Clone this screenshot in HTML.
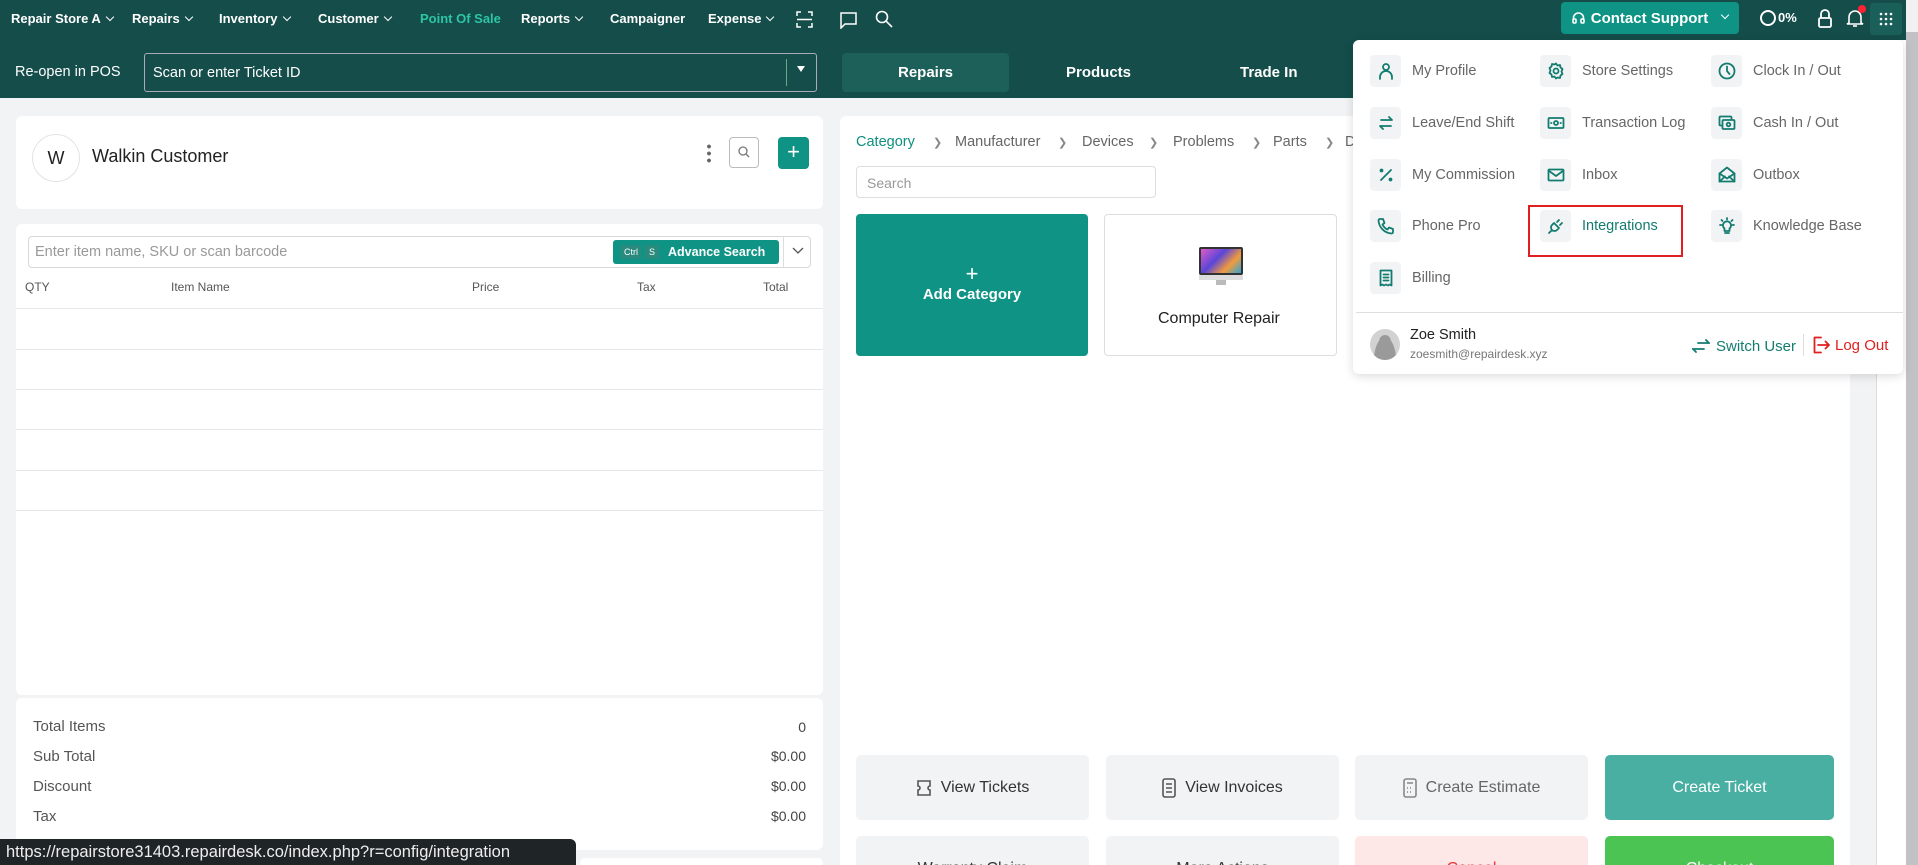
<!DOCTYPE html>
<html style="overflow:hidden;width:1918px;height:865px"><head><meta charset="utf-8"><style>
*{box-sizing:border-box;margin:0;padding:0}
body{width:1918px;height:865px;overflow:hidden;background:#f2f3f5;font-family:"Liberation Sans",sans-serif;position:relative;color:#222}
.abs{position:absolute}
.top{left:0;top:0;width:1918px;height:98px;background:#144d4a}
.nav{top:11px;font-size:13px;font-weight:bold;color:#fff;white-space:nowrap}
.chev{display:inline-block;width:6px;height:6px;border-right:1.3px solid #fff;border-bottom:1.3px solid #fff;transform:rotate(45deg);margin-left:6px;position:relative;top:-3px}
.card{background:#fff;border-radius:6px}
.line{position:absolute;left:16px;width:807px;height:1px;background:#e6e7ea}
.th{position:absolute;top:280px;font-size:12px;color:#555}
.tot{position:absolute;font-size:15px;color:#555}
.totr{position:absolute;right:1112px;font-size:14px;color:#444}
.bc{position:absolute;top:134px;font-size:14.5px;color:#666}
.gt{position:absolute;color:#888;font-size:11px;top:136px}
.btn{position:absolute;height:65px;border-radius:5px;background:#f2f3f5;display:flex;align-items:center;justify-content:center;font-size:16px;color:#333;gap:9px}
.dd{left:1353px;top:40px;width:550px;height:334px;background:#fff;border-radius:6px;box-shadow:0 2px 10px rgba(0,0,0,.15)}
.it{position:absolute;display:flex;align-items:center;font-size:14.5px;color:#666}
.ib{width:31px;height:32px;background:#f2f3f5;border-radius:4px;margin-right:11px;display:flex;align-items:center;justify-content:center}
.ib svg{width:18px;height:18px;fill:none;stroke:#137c70;stroke-width:1.8;stroke-linecap:round;stroke-linejoin:round}
</style></head><body>
<div class="abs top"></div>
<div class="abs nav" style="left:11px">Repair Store A<span class="chev"></span></div>
<div class="abs nav" style="left:132px">Repairs<span class="chev"></span></div>
<div class="abs nav" style="left:219px">Inventory<span class="chev"></span></div>
<div class="abs nav" style="left:318px">Customer<span class="chev"></span></div>
<div class="abs nav" style="left:420px;color:#2ec4a6">Point Of Sale</div>
<div class="abs nav" style="left:521px">Reports<span class="chev"></span></div>
<div class="abs nav" style="left:610px">Campaigner</div>
<div class="abs nav" style="left:708px">Expense<span class="chev"></span></div>
<svg class="abs" style="left:796px;top:11px" width="17" height="17" fill="none" stroke="#fff" stroke-width="1.5"><path d="M1 5V1h4M12 1h4v4M16 12v4h-4M5 16H1v-4M1 8.5h15"/></svg>
<svg class="abs" style="left:840px;top:12px" width="17" height="17" fill="none" stroke="#fff" stroke-width="1.5"><path d="M1 1h15v11H5l-4 4z"/></svg>
<svg class="abs" style="left:875px;top:10px" width="18" height="18" fill="none" stroke="#fff" stroke-width="1.6"><circle cx="7" cy="7" r="5.5"/><path d="M11 11l6 6"/></svg>
<div class="abs" style="left:1561px;top:2px;width:178px;height:32px;background:#0e9384;border-radius:4px;color:#fff;font-size:15px;font-weight:bold;display:flex;align-items:center;justify-content:center;gap:6px"><svg width="13" height="14" fill="none" stroke="#fff" stroke-width="1.6"><path d="M1.5 9V7a5 5 0 0110 0v2"/><rect x="1" y="8" width="3" height="4" rx="1"/><rect x="9" y="8" width="3" height="4" rx="1"/></svg>Contact Support<span class="chev" style="margin-left:8px"></span></div>
<div class="abs" style="left:1760px;top:10px;width:16px;height:16px;border:2px solid #fff;border-radius:50%"></div>
<div class="abs" style="left:1778px;top:10px;color:#fff;font-size:13px;font-weight:bold">0%</div>
<svg class="abs" style="left:1817px;top:9px" width="16" height="20" fill="none" stroke="#fff" stroke-width="1.8"><path d="M4 9V5a4 4 0 018 0v4"/><rect x="2" y="9" width="12" height="9" rx="1.5"/></svg>
<svg class="abs" style="left:1846px;top:8px" width="18" height="20" fill="none" stroke="#fff" stroke-width="1.6"><path d="M3 15V9a6 6 0 0112 0v6l2 1H1z"/><path d="M7 18h4"/></svg>
<div class="abs" style="left:1858px;top:5px;width:8px;height:8px;background:#f23;border-radius:50%"></div>
<div class="abs" style="left:1870px;top:3px;width:32px;height:32px;background:#1b5f5a;border-radius:3px"></div>
<svg class="abs" style="left:1879px;top:12px" width="14" height="14" fill="#fff"><circle cx="2" cy="2" r="1.3"/><circle cx="7" cy="2" r="1.3"/><circle cx="12" cy="2" r="1.3"/><circle cx="2" cy="7" r="1.3"/><circle cx="7" cy="7" r="1.3"/><circle cx="12" cy="7" r="1.3"/><circle cx="2" cy="12" r="1.3"/><circle cx="7" cy="12" r="1.3"/><circle cx="12" cy="12" r="1.3"/></svg>

<div class="abs" style="left:15px;top:64px;color:#fff;font-size:14.5px">Re-open in POS</div>
<div class="abs" style="left:144px;top:53px;width:673px;height:39px;border:1px solid #aab;border-radius:3px;color:#fff;font-size:14.5px;padding:11px 8px">Scan or enter Ticket ID</div>
<div class="abs" style="left:786px;top:59px;width:1px;height:27px;background:#6a8"></div>
<div class="abs" style="left:797px;top:66px;width:0;height:0;border-left:4px solid transparent;border-right:4px solid transparent;border-top:6px solid #fff"></div>
<div class="abs" style="left:842px;top:53px;width:167px;height:39px;background:#1d5f59;border-radius:4px;color:#fff;font-size:15px;font-weight:bold;text-align:center;line-height:39px">Repairs</div>
<div class="abs" style="left:1066px;top:64px;color:#fff;font-size:15px;font-weight:bold">Products</div>
<div class="abs" style="left:1240px;top:64px;color:#fff;font-size:15px;font-weight:bold">Trade In</div>

<div class="abs card" style="left:16px;top:116px;width:807px;height:93px"></div>
<div class="abs" style="left:32px;top:134px;width:48px;height:48px;border:1px solid #e3e3e3;border-radius:50%;text-align:center;line-height:46px;font-size:18px">W</div>
<div class="abs" style="left:92px;top:146px;font-size:18px;color:#222">Walkin Customer</div>
<div class="abs" style="left:707px;top:143px;width:4px;height:20px;background:radial-gradient(circle,#666 1.8px,transparent 2px) 0 0/4px 7px"></div>
<div class="abs" style="left:729px;top:137px;width:30px;height:31px;border:1px solid #bbb;border-radius:4px"></div>
<svg class="abs" style="left:738px;top:146px" width="12" height="12" fill="none" stroke="#777" stroke-width="1.3"><circle cx="5" cy="5" r="4"/><path d="M8 8l3 3"/></svg>
<div class="abs" style="left:778px;top:137px;width:31px;height:32px;background:#0e9384;border-radius:4px;color:#fff;font-size:22px;text-align:center;line-height:30px">+</div>

<div class="abs card" style="left:16px;top:224px;width:807px;height:471px"></div>
<div class="abs" style="left:28px;top:236px;width:783px;height:32px;border:1px solid #d6d8dc;border-radius:4px"></div>
<div class="abs" style="left:35px;top:244px;font-size:14.5px;color:#999">Enter item name, SKU or scan barcode</div>
<div class="abs" style="left:613px;top:240px;width:166px;height:24px;background:#0e9384;border-radius:3px;color:#fff;font-size:12.5px;font-weight:bold;display:flex;align-items:center;padding-left:8px;gap:4px"><span style="background:#2a8a7d;font-size:9px;font-weight:normal;padding:2px 3px;border-radius:2px">Ctrl</span><span style="background:#2a8a7d;font-size:9px;font-weight:normal;padding:2px 4px;border-radius:2px">S</span><span style="margin-left:5px">Advance Search</span></div>
<div class="abs" style="left:783px;top:237px;width:1px;height:30px;background:#ddd"></div>
<svg class="abs" style="left:792px;top:247px" width="12" height="8" fill="none" stroke="#555" stroke-width="1.3"><path d="M1 1l5 5 5-5"/></svg>
<div class="th" style="left:25px">QTY</div><div class="th" style="left:171px">Item Name</div><div class="th" style="left:472px">Price</div><div class="th" style="left:637px">Tax</div><div class="th" style="left:763px">Total</div>
<div class="line" style="top:308px"></div><div class="line" style="top:349px"></div><div class="line" style="top:389px"></div><div class="line" style="top:429px"></div><div class="line" style="top:470px"></div><div class="line" style="top:510px"></div>

<div class="abs card" style="left:16px;top:698px;width:807px;height:152px"></div>
<div class="tot" style="left:33px;top:718px">Total Items</div><div class="totr" style="top:719px">0</div>
<div class="tot" style="left:33px;top:748px">Sub Total</div><div class="totr" style="top:748px">$0.00</div>
<div class="tot" style="left:33px;top:778px">Discount</div><div class="totr" style="top:778px">$0.00</div>
<div class="tot" style="left:33px;top:808px">Tax</div><div class="totr" style="top:808px">$0.00</div>
<div class="abs card" style="left:580px;top:858px;width:243px;height:10px"></div>
<div class="abs" style="left:0;top:839px;width:576px;height:26px;background:#1f2426;border-radius:0 6px 0 0;color:#eee;font-size:16.5px;padding:4px 0 0 6px;white-space:nowrap">https://repairstore31403.repairdesk.co/index.php?r=config/integration</div>

<div class="abs" style="left:840px;top:116px;width:1010px;height:749px;background:#fff;border-radius:6px 6px 0 0"></div>
<div class="bc" style="left:856px;color:#0e8f7f">Category</div><div class="gt" style="left:933px">❯</div>
<div class="bc" style="left:955px">Manufacturer</div><div class="gt" style="left:1058px">❯</div>
<div class="bc" style="left:1082px">Devices</div><div class="gt" style="left:1149px">❯</div>
<div class="bc" style="left:1173px">Problems</div><div class="gt" style="left:1252px">❯</div>
<div class="bc" style="left:1273px">Parts</div><div class="gt" style="left:1325px">❯</div>
<div class="bc" style="left:1345px">D</div>
<div class="abs" style="left:856px;top:166px;width:300px;height:32px;border:1px solid #ddd;border-radius:4px;font-size:14px;color:#999;padding:8px 10px">Search</div>
<div class="abs" style="left:856px;top:214px;width:232px;height:142px;background:#0e9384;border-radius:4px;color:#fff;text-align:center"><div style="font-size:22px;margin-top:50px;line-height:20px">+</div><div style="font-size:15px;font-weight:bold;margin-top:2px">Add Category</div></div>
<div class="abs" style="left:1104px;top:214px;width:233px;height:142px;border:1px solid #ddd;border-radius:4px"></div>
<div class="abs" style="left:1199px;top:247px;width:44px;height:28px;background:linear-gradient(135deg,#e05ac7,#5a46d8 40%,#f39b3b 70%,#2ea4d9);border:2px solid #333;border-radius:2px"></div>
<div class="abs" style="left:1199px;top:275px;width:44px;height:5px;background:#ddd"></div>
<div class="abs" style="left:1216px;top:280px;width:10px;height:5px;background:#bbb"></div>
<div class="abs" style="left:1158px;top:310px;font-size:16px;color:#222">Computer Repair</div>

<div class="btn" style="left:856px;top:755px;width:233px"><svg width="16" height="18" fill="none" stroke="#555" stroke-width="1.6"><path d="M2 2h12v5a2 2 0 000 4v5H2v-5a2 2 0 000-4z"/></svg>View Tickets</div>
<div class="btn" style="left:1106px;top:755px;width:233px"><svg width="14" height="20" fill="none" stroke="#555" stroke-width="1.6"><rect x="1" y="1" width="12" height="18" rx="2"/><path d="M4 6h6M4 10h6M4 14h6"/></svg>View Invoices</div>
<div class="btn" style="left:1355px;top:755px;width:233px;color:#666"><svg width="14" height="20" fill="none" stroke="#888" stroke-width="1.6"><rect x="1" y="1" width="12" height="18" rx="2"/><path d="M4 5h6M4 10h1M7 10h1M4 14h1M7 14h1"/></svg>Create Estimate</div>
<div class="btn" style="left:1605px;top:755px;width:229px;background:#4aafa3;color:#fff">Create Ticket</div>
<div class="btn" style="left:856px;top:836px;width:233px;align-items:flex-start;padding-top:24px">Warranty Claim</div>
<div class="btn" style="left:1106px;top:836px;width:233px;align-items:flex-start;padding-top:24px">More Actions</div>
<div class="btn" style="left:1355px;top:836px;width:233px;background:#fde7e7;color:#e33;align-items:flex-start;padding-top:24px">Cancel</div>
<div class="btn" style="left:1605px;top:836px;width:229px;background:#4bc453;color:#fff;align-items:flex-start;padding-top:24px">Checkout</div>

<div class="abs" style="left:1876px;top:40px;width:30px;height:825px;background:#fff;border-left:1px solid #ddd"></div>
<div class="abs" style="left:1906px;top:0;width:12px;height:865px;background:#c1c1c6"></div>
<div class="abs" style="left:1906px;top:0;width:12px;height:32px;background:#f1f1f1"></div>

<div class="abs dd"></div>
<div class="it" style="left:1370px;top:55px"><div class="ib"><svg viewBox="0 0 18 18"><circle cx="9" cy="5" r="3"/><path d="M3 17v-2a6 6 0 0112 0v2"/></svg></div>My Profile</div>
<div class="it" style="left:1540px;top:55px"><div class="ib"><svg viewBox="0 0 18 18"><circle cx="9" cy="9" r="2.5"/><path d="M9 1.5l1.5 2 2.5-.5.5 2.5 2 1.5-1 2.5 1 2.5-2 1.5-.5 2.5-2.5-.5L9 16.5l-1.5-2-2.5.5-.5-2.5-2-1.5 1-2.5-1-2.5 2-1.5.5-2.5 2.5.5z"/></svg></div>Store Settings</div>
<div class="it" style="left:1711px;top:55px"><div class="ib"><svg viewBox="0 0 18 18"><circle cx="9" cy="9" r="7.5"/><path d="M9 4.5V9l2.5 3"/></svg></div>Clock In / Out</div>
<div class="it" style="left:1370px;top:107px"><div class="ib"><svg viewBox="0 0 18 18"><path d="M4 6h11l-3-3M14 12H3l3 3"/></svg></div>Leave/End Shift</div>
<div class="it" style="left:1540px;top:107px"><div class="ib"><svg viewBox="0 0 18 18"><rect x="1.5" y="4" width="15" height="10" rx="1"/><circle cx="9" cy="9" r="2"/><path d="M4 9h.5M13.5 9h.5"/></svg></div>Transaction Log</div>
<div class="it" style="left:1711px;top:107px"><div class="ib"><svg viewBox="0 0 18 18"><rect x="1.5" y="2.5" width="12" height="9" rx="1"/><rect x="4.5" y="6" width="12" height="9" rx="1" fill="#f2f3f5"/><circle cx="10.5" cy="10.5" r="1.8"/></svg></div>Cash In / Out</div>
<div class="it" style="left:1370px;top:159px"><div class="ib"><svg viewBox="0 0 18 18"><path d="M14 4L4 14"/><circle cx="4.5" cy="4.5" r="1" fill="#137c70"/><circle cx="13.5" cy="13.5" r="1" fill="#137c70"/></svg></div>My Commission</div>
<div class="it" style="left:1540px;top:159px"><div class="ib"><svg viewBox="0 0 18 18"><rect x="1.5" y="3.5" width="15" height="11" rx="1"/><path d="M1.5 4.5L9 10l7.5-5.5"/></svg></div>Inbox</div>
<div class="it" style="left:1711px;top:159px"><div class="ib"><svg viewBox="0 0 18 18"><path d="M1.5 7.5L9 1.5l7.5 6v8h-15z"/><path d="M1.5 7.5l7.5 5 7.5-5M1.5 15.5l5.5-5M16.5 15.5l-5.5-5"/></svg></div>Outbox</div>
<div class="it" style="left:1370px;top:210px"><div class="ib"><svg viewBox="0 0 18 18"><path d="M3 2h3l1.5 4-2 1.5a10 10 0 005 5l1.5-2 4 1.5v3a1.5 1.5 0 01-1.5 1.5A14 14 0 011.5 3.5 1.5 1.5 0 013 2z"/></svg></div>Phone Pro</div>
<div class="it" style="left:1540px;top:210px;color:#137c70"><div class="ib"><svg viewBox="0 0 18 18"><path d="M2 16l3-3M7 6l5 5-2 2a3.5 3.5 0 01-5-5zM10 5l2-2M13 8l2-2"/></svg></div>Integrations</div>
<div class="it" style="left:1711px;top:210px"><div class="ib"><svg viewBox="0 0 18 18"><path d="M6.5 11.5a4 4 0 115 0V14h-5z M7 16h4M9 1v1.5M2 8h1.5M14.5 8H16M3.5 3l1 1M14.5 3l-1 1"/></svg></div>Knowledge Base</div>
<div class="it" style="left:1370px;top:262px"><div class="ib"><svg viewBox="0 0 18 18"><path d="M3.5 1.5h11v15l-2-1-1.5 1-2-1-2 1-1.5-1-2 1z"/><path d="M6.5 5.5h5M6.5 8.5h5M6.5 11.5h5"/></svg></div>Billing</div>
<div class="abs" style="left:1528px;top:205px;width:155px;height:52px;border:2px solid #e02020"></div>
<div class="abs" style="left:1356px;top:312px;width:547px;height:1px;background:#ddd"></div>
<div class="abs" style="left:1370px;top:329px;width:30px;height:31px;border-radius:50%;background:radial-gradient(circle at 50% 38%,#9a9a9a 5.5px,transparent 6px),radial-gradient(ellipse at 50% 105%,#9a9a9a 11px,transparent 11.5px),#d2d2d2"></div>
<div class="abs" style="left:1410px;top:327px;font-size:14.5px;color:#222">Zoe Smith</div>
<div class="abs" style="left:1410px;top:347px;font-size:12px;color:#777">zoesmith@repairdesk.xyz</div>
<svg class="abs" style="left:1692px;top:337px" width="18" height="18" fill="none" stroke="#137c70" stroke-width="1.8" stroke-linecap="round"><path d="M6 6h11l-3-3M12 12H1l3 3"/></svg>
<div class="abs" style="left:1716px;top:338px;font-size:15px;color:#137c70">Switch User</div>
<div class="abs" style="left:1803px;top:334px;width:1px;height:22px;background:#ddd"></div>
<svg class="abs" style="left:1812px;top:336px" width="18" height="18" fill="none" stroke="#e02020" stroke-width="1.8" stroke-linecap="round" stroke-linejoin="round"><path d="M9 1.5H2.5v15H9M6 9h11M13.5 5.5L17 9l-3.5 3.5"/></svg>
<div class="abs" style="left:1835px;top:337px;font-size:15px;color:#e02020">Log Out</div>
</body></html>
